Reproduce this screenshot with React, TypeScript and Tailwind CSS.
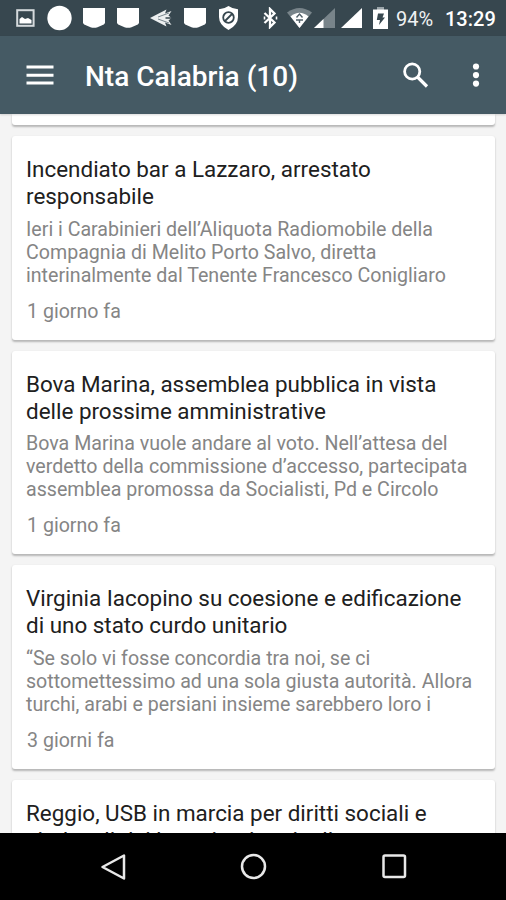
import React from 'react';

type Article = { title: string[]; body: string[]; date: string };

const articles: Article[] = [
  {
    title: ['Incendiato bar a Lazzaro, arrestato', 'responsabile'],
    body: [
      'Ieri i Carabinieri dell’Aliquota Radiomobile della',
      'Compagnia di Melito Porto Salvo, diretta',
      'interinalmente dal Tenente Francesco Conigliaro',
    ],
    date: '1 giorno fa',
  },
  {
    title: ['Bova Marina, assemblea pubblica in vista', 'delle prossime amministrative'],
    body: [
      'Bova Marina vuole andare al voto. Nell’attesa del',
      'verdetto della commissione d’accesso, partecipata',
      'assemblea promossa da Socialisti, Pd e Circolo',
    ],
    date: '1 giorno fa',
  },
  {
    title: ['Virginia Iacopino su coesione e edificazione', 'di uno stato curdo unitario'],
    body: [
      '“Se solo vi fosse concordia tra noi, se ci',
      'sottomettessimo ad una sola giusta autorità. Allora',
      'turchi, arabi e persiani insieme sarebbero loro i',
    ],
    date: '3 giorni fa',
  },
  {
    title: ['Reggio, USB in marcia per diritti sociali e', 'sindacali dei braccianti agricoli'],
    body: [],
    date: '',
  },
];

function Pocket({ className }: { className: string }) {
  return (
    <svg className={className} width="22" height="20" viewBox="0 0 22 20" fill="#fff">
      <path d="M0 0H22V14.500Q22 15.800 20.800 16.400L14.500 19.200Q11 20.400 7.500 19.200L1.200 16.400Q0 15.800 0 14.500Z" />
    </svg>
  );
}

function StatusBar() {
  return (
    <div className="flex h-9 shrink-0 items-center bg-[#37474f] text-white">
      <svg className="ml-4 shrink-0" width="19" height="18" viewBox="0 0 19 18">
        <rect x="1.200" y="1.200" width="16.400" height="15.600" fill="none" stroke="#d5dadd" strokeWidth="2" />
        <path d="M3.500 14.500V10L6 8l3 2 3-1 3.500 2v3.500z" fill="#fff" />
      </svg>
      <svg className="ml-3 shrink-0" width="25" height="26" viewBox="0 0 25 26">
        <circle cx="12.500" cy="13" r="12.200" fill="#fff" />
      </svg>
      <Pocket className="ml-[11px] shrink-0" />
      <Pocket className="ml-3 shrink-0" />
      <svg className="ml-[11px] shrink-0" width="22" height="18" viewBox="0 0 22 18">
        <path d="M0 9L16.500 .5 15 4.500l6.500-2.500-3 4.500 3 2.500-3 2.500 3 4.500L15 13.500l1.500 4z" fill="#eceff0" />
        <path d="M8 8l11-4M8 10l11 4" stroke="#78868d" strokeWidth="1" />
        <path d="M15.500 9H22" stroke="#37474f" strokeWidth="1.500" />
      </svg>
      <Pocket className="ml-3 shrink-0" />
      <svg className="ml-3 shrink-0" width="21" height="24" viewBox="0 0 21 24">
        <path d="M10.500 0Q15 3.200 20 3.200V11Q20 19 10.500 24 1 19 1 11V3.200Q6 3.200 10.500 0Z" fill="#fff" />
        <circle cx="10.500" cy="11.500" r="5.300" fill="none" stroke="#37474f" strokeWidth="1.800" />
        <path d="M7 15l7-7" stroke="#37474f" strokeWidth="1.800" />
      </svg>
      <svg className="ml-[24px] shrink-0" width="15" height="22" viewBox="0 0 15 22" fill="none" stroke="#fff" strokeWidth="2.300">
        <path d="M1.500 6L11.500 15.500 7 20V2l4.500 4.500L1.500 16" />
        <path d="M13.500 9.500v3M1.500 9.500v3" strokeWidth="1.600" />
      </svg>
      <svg className="ml-[9px] shrink-0" width="25" height="20" viewBox="0 0 25 20">
        <path d="M0 4.500Q12.500-4.500 25 4.500L12.500 20Z" fill="#78848a" />
        <path d="M3.500 8.500Q12.500 1 21.500 8.500L12.500 20Z" fill="#fff" />
        <path d="M9.500 9.500l3-3.500 3 3.500M9 12h7M12.500 12v3" stroke="#52616a" strokeWidth="1.400" fill="none" />
      </svg>
      <svg className="ml-[2px] shrink-0" width="21" height="20" viewBox="0 0 21 20">
        <path d="M0 20L21 0V20Z" fill="#78848a" />
        <path d="M0 20L9.500 11V20Z" fill="#fff" />
      </svg>
      <svg className="ml-[6px] shrink-0" width="21" height="20" viewBox="0 0 21 20">
        <path d="M0 20L21 0V20Z" fill="#fff" />
      </svg>
      <svg className="ml-[11px] shrink-0" width="15" height="22" viewBox="0 0 15 22">
        <path d="M4 0h7v2.500h4V22H0V2.500h4z" fill="#fff" />
        <path d="M4 0h7v2.500H4z" fill="#9aa4a9" />
        <path d="M5 6.500h6L9.500 10.500H12L6 18l1-5H3.800z" fill="#37474f" />
      </svg>
      <span className="mt-[2px] ml-[8px] w-[38px] text-[20px] leading-6 whitespace-nowrap text-[#f0f2f3]">94%</span>
      <span className="mt-[2px] ml-[11px] text-[20px] leading-6 font-medium whitespace-nowrap">13:29</span>
    </div>
  );
}

function AppBar() {
  return (
    <header className="z-10 flex h-[78px] shrink-0 items-center bg-[#455a64] text-white shadow-[0_1px_2px_rgba(0,0,0,0.15)]">
      <svg className="ml-[26px] shrink-0" width="28" height="20" viewBox="0 0 28 20">
        <path d="M.5 2H27.500M.5 10.200H27.500M.5 18H27.500" stroke="#fff" strokeWidth="3" />
      </svg>
      <h1 className="mt-[3px] ml-[31px] grow text-[28px] leading-8 font-medium whitespace-nowrap">Nta Calabria (10)</h1>
      <svg className="shrink-0" width="27" height="27" viewBox="0 0 27 27" fill="none" stroke="#fff">
        <circle cx="10.200" cy="9.500" r="7.600" strokeWidth="2.800" />
        <path d="M15.500 15l9.500 9.500" strokeWidth="3.200" />
      </svg>
      <svg className="mr-[26px] ml-[43px] shrink-0" width="8" height="24" viewBox="0 0 8 24" fill="#fff">
        <circle cx="4" cy="3.500" r="3.100" />
        <circle cx="4" cy="12.100" r="3.100" />
        <circle cx="4" cy="20.600" r="3.100" />
      </svg>
    </header>
  );
}

function Card({ article }: { article: Article }) {
  return (
    <article className="h-[203.700px] shrink-0 rounded-[3px] bg-white px-[14px] pt-5 whitespace-nowrap shadow-[0_1.500px_2px_rgba(0,0,0,0.25)]">
      <h2 className="text-[22.430px] leading-[27px] text-[#202020]">
        {article.title.map((line) => (
          <span key={line} className="block">{line}</span>
        ))}
      </h2>
      <p className="mt-[7.500px] text-[19.620px] leading-[23px] text-[#858585]">
        {article.body.map((line) => (
          <span key={line} className="block">{line}</span>
        ))}
      </p>
      <time className="mt-[13px] ml-px block text-[19.620px] leading-6 text-[#858585]">{article.date}</time>
    </article>
  );
}

function NavigationBar() {
  return (
    <nav className="z-10 flex h-[67px] shrink-0 items-center bg-black">
      <svg className="ml-[100px]" width="26" height="26" viewBox="0 0 26 26" fill="none" stroke="#e8e8e8" strokeWidth="2.500" strokeLinejoin="round">
        <path d="M2.500 13L24 1.500V24.500Z" />
      </svg>
      <svg className="ml-[114px]" width="27" height="27" viewBox="0 0 27 27" fill="none" stroke="#e8e8e8" strokeWidth="2.500">
        <circle cx="13.500" cy="13.500" r="11.500" />
      </svg>
      <svg className="ml-[115px]" width="25" height="25" viewBox="0 0 25 25" fill="none" stroke="#e8e8e8" strokeWidth="2.500">
        <rect x="1.500" y="1.500" width="21.500" height="21.500" rx="1.500" />
      </svg>
    </nav>
  );
}

export default function App() {
  return (
    <div className="flex h-[900px] w-[506px] flex-col overflow-hidden bg-[#f4f4f4] font-['Roboto',sans-serif]">
      <StatusBar />
      <AppBar />
      <main className="flex min-h-0 grow flex-col gap-[11px] overflow-hidden pr-[11px] pl-3">
        <div className="h-[11px] shrink-0 rounded-b-[3px] bg-white shadow-[0_1.500px_2px_rgba(0,0,0,0.25)]" />
        {articles.map((article) => (
          <Card key={article.title[0]} article={article} />
        ))}
      </main>
      <NavigationBar />
    </div>
  );
}
